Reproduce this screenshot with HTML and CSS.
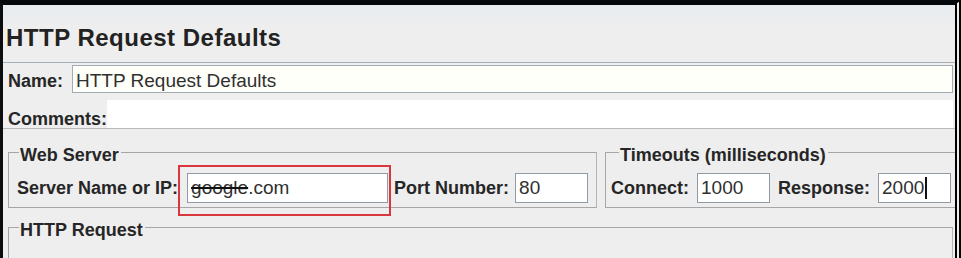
FILE: index.html
```html
<!DOCTYPE html>
<html lang="en">
<head>
  <meta charset="UTF-8" />
  <title>HTTP Request Defaults</title>
  <link rel="stylesheet" href="styles.css">
</head>
<body>
  <div class="frame">
    <header class="title-bar">HTTP Request Defaults</header>

    <div class="row name-row">
      <label class="label">Name:</label>
      <div class="field wide">HTTP Request Defaults</div>
    </div>

    <div class="row comments-row">
      <label class="label">Comments:</label>
      <div class="comments-area"></div>
    </div>

    <div class="panel">
      <div class="boxes">
        <div class="group web-server">
          <div class="group-title">Web Server</div>
          <div class="group-row">
            <span class="label">Server Name or IP:</span>
            <span class="marked">
              <span class="field server-field"><span class="struck">google</span>.com</span>
            </span>
            <span class="label">Port Number:</span>
            <span class="field port-field">80</span>
          </div>
        </div>

        <div class="group timeouts">
          <div class="group-title">Timeouts (milliseconds)</div>
          <div class="group-row">
            <span class="label">Connect:</span>
            <span class="field small-field connect-field">1000</span>
            <span class="label">Response:</span>
            <span class="field small-field response-field"><span class="caret">2000</span></span>
          </div>
        </div>
      </div>

      <div class="group http-request">
        <div class="group-title">HTTP Request</div>
      </div>
    </div>
  </div>
</body>
</html>
```

FILE: styles.css
```css
body {
  margin: 0;
  width: 961px;
  height: 258px;
  overflow: hidden;
  background: #000;
  font-family: 'Liberation Sans', Arial, sans-serif;
  color: #252525;
}
.frame {
  height: 253px;
  border-top: 5px solid #05080b;
  border-left: 3px solid #0b0d10;
  border-right: 6px double #000;
  background: #eeeeee;
  overflow: hidden;
}
.title-bar {
  height: 58px;
  box-sizing: border-box;
  padding: 19px 0 0 3px;
  font-size: 24px;
  line-height: 28px;
  font-weight: bold;
  letter-spacing: 0.5px;
  color: #222;
  background: linear-gradient(#e7ecf0, #eeeeee 40%);
  border-bottom: 1px solid #a7afb6;
}
.row {
  display: flex;
  padding-left: 5px;
}
.label {
  font-size: 18px;
  font-weight: bold;
  line-height: 20px;
  white-space: nowrap;
  color: #262626;
}
.field {
  box-sizing: border-box;
  display: flex;
  align-items: center;
  padding-left: 3px;
  font-size: 19px;
  color: #303030;
  background: #fff;
  border: 1px solid #8e9ba7;
  white-space: nowrap;
}
.name-row {
  margin-top: 2px;
  height: 28px;
}
.name-row .label {
  width: 64px;
  align-self: flex-end;
  margin-bottom: 2px;
}
.field.wide {
  flex: 1;
  height: 28px;
  margin-right: 2px;
  padding-top: 4px;
  background: #fffff9;
  border-color: #a3abb3;
}
.comments-row {
  margin-top: 7px;
  height: 28px;
  border-bottom: 1px solid #b9b9b9;
}
.comments-row .label {
  align-self: flex-end;
  margin-bottom: -1px;
}
.comments-area {
  flex: 1;
  margin-right: 2px;
  background: #fff;
}
.panel {
  padding: 23px 0 0 5px;
}
.boxes {
  display: flex;
  gap: 8px;
}
.group {
  padding: 0 5px 4px 8px;
  border: 1px solid #a6a6a6;
  border-right-color: #b4b4b4;
}
.group-title {
  width: fit-content;
  margin: -8px 0 0 2px;
  padding: 0 2px 0 1px;
  font-size: 18px;
  font-weight: bold;
  line-height: 20px;
  color: #262626;
  background: #eeeeee;
}
.group-row {
  display: flex;
  align-items: center;
  height: 30px;
  margin-top: 8px;
}
.web-server {
  width: 589px;
  box-sizing: border-box;
  flex: none;
}
.marked {
  position: relative;
  margin-left: 9px;
  margin-right: 6px;
}
.marked::after {
  content: "";
  position: absolute;
  left: -9px;
  top: -8px;
  right: -3px;
  bottom: -13px;
  border: 2px solid #d9363e;
}
.server-field {
  width: 201px;
  height: 30px;
}
.struck {
  text-decoration: line-through;
  text-decoration-color: #111;
  text-decoration-thickness: 2px;
}
.port-field {
  width: 73px;
  height: 30px;
  margin-left: 6px;
}
.timeouts {
  flex: none;
  width: 360px;
  padding-left: 5px;
}
.timeouts .group-title {
  margin-left: 8px;
}
.small-field {
  width: 73px;
  height: 30px;
}
.connect-field {
  margin: 0 8px 0 8px;
}
.response-field {
  margin-left: 8px;
}
.caret {
  border-right: 2px solid #111;
  padding-right: 1px;
}
.http-request {
  margin: 19px 2px 0 0;
  height: 60px;
}
```
